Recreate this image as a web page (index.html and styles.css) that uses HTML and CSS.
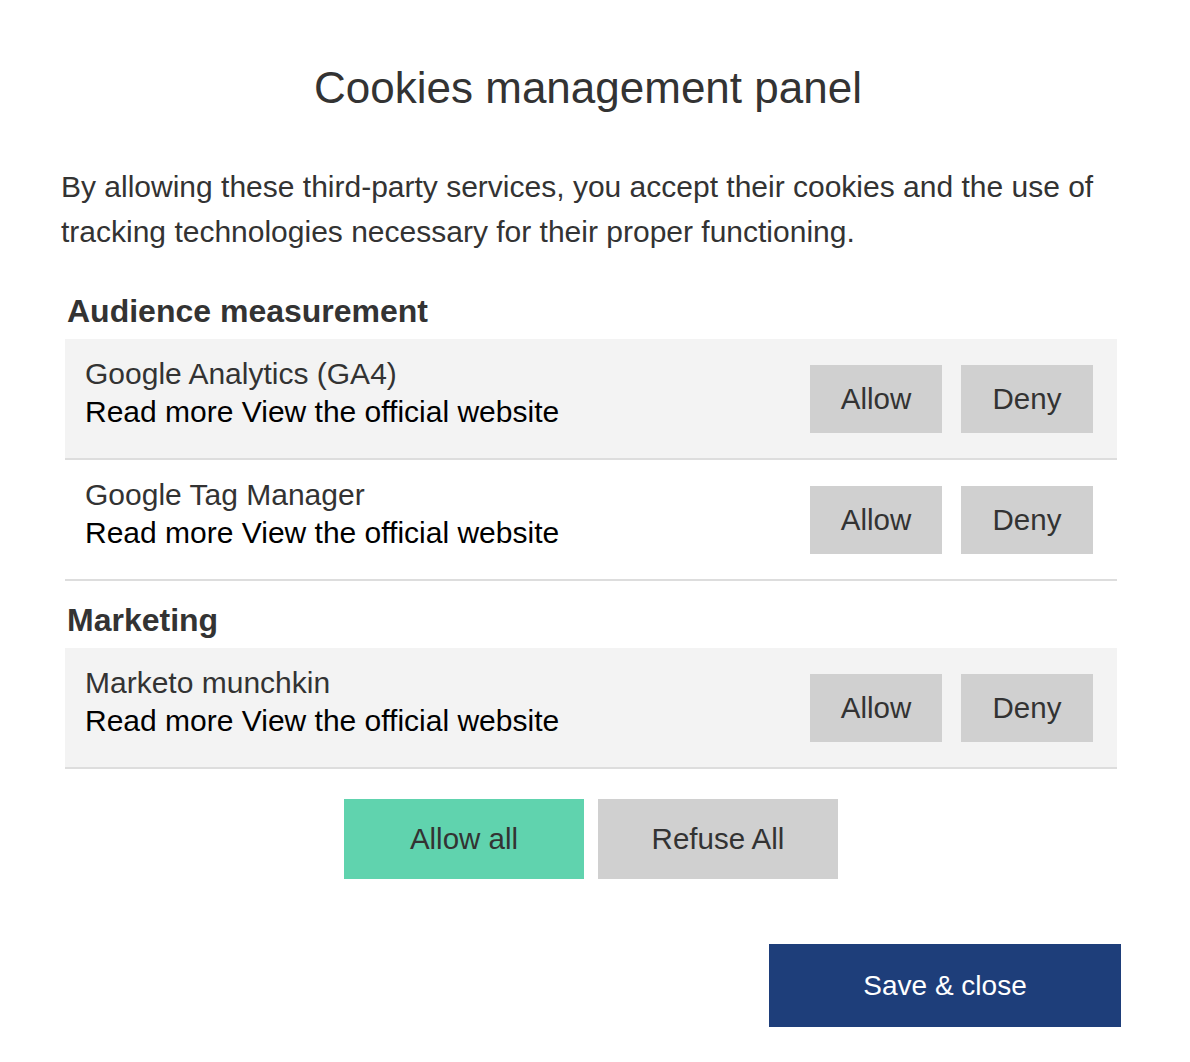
FILE: index.html
```html
<!DOCTYPE html>
<html lang="en">
<head>
<meta charset="utf-8">
<title>Cookies management panel</title>
<link rel="stylesheet" href="styles.css">
</head>
<body>
<div class="panel">
  <h1 class="title">Cookies management panel</h1>
  <p class="intro">By allowing these third-party services, you accept their cookies and the use of tracking technologies necessary for their proper functioning.</p>

  <h2 class="group-title">Audience measurement</h2>
  <div class="service shaded">
    <div class="service-info">
      <div class="service-name">Google Analytics (GA4)</div>
      <div class="service-links"><a href="#">Read more</a> <a href="#">View the official website</a></div>
    </div>
    <div class="service-actions">
      <button class="btn-small">Allow</button>
      <button class="btn-small">Deny</button>
    </div>
  </div>
  <div class="service">
    <div class="service-info">
      <div class="service-name">Google Tag Manager</div>
      <div class="service-links"><a href="#">Read more</a> <a href="#">View the official website</a></div>
    </div>
    <div class="service-actions">
      <button class="btn-small">Allow</button>
      <button class="btn-small">Deny</button>
    </div>
  </div>

  <h2 class="group-title second">Marketing</h2>
  <div class="service shaded">
    <div class="service-info">
      <div class="service-name">Marketo munchkin</div>
      <div class="service-links"><a href="#">Read more</a> <a href="#">View the official website</a></div>
    </div>
    <div class="service-actions">
      <button class="btn-small">Allow</button>
      <button class="btn-small">Deny</button>
    </div>
  </div>

  <div class="global-actions">
    <button class="btn-large btn-allow">Allow all</button>
    <button class="btn-large btn-refuse">Refuse All</button>
  </div>

  <div class="footer">
    <button class="btn-save">Save &amp; close</button>
  </div>
</div>
</body>
</html>
```

FILE: styles.css
```css
html, body {
  margin: 0;
  padding: 0;
  background: #ffffff;
}

body {
  font-family: "Liberation Sans", Arial, Helvetica, sans-serif;
  color: #333333;
}

.panel {
  width: 1060px;
  padding: 0 69px 0 61px;
}

.title {
  margin: 63px 0 0;
  padding-right: 6px;
  font-size: 44px;
  line-height: 50px;
  font-weight: normal;
  text-align: center;
  color: #333333;
}

.intro {
  margin: 51px 0 0;
  font-size: 30px;
  line-height: 45px;
  color: #333333;
}

.group-title {
  margin: 37px 0 0 6px;
  font-size: 32px;
  line-height: 40px;
  font-weight: bold;
  color: #333333;
}

.group-title.second {
  margin-top: 19px;
}

.service {
  margin: 8px 4px 0;
  display: flex;
  align-items: center;
  justify-content: space-between;
  height: 119px;
  padding: 0 24px 0 20px;
  border-bottom: 2px solid #dddddd;
  box-sizing: content-box;
}

.service + .service {
  margin-top: 0;
}

.service.shaded {
  background: #f3f3f3;
}

.service-info {
  font-size: 30px;
  line-height: 38px;
  margin-top: -11px;
}

.service-name {
  color: #333333;
}

.service-links a {
  color: #000000;
  text-decoration: none;
}

.service-actions {
  display: flex;
  gap: 19px;
}

button {
  font-family: "Liberation Sans", Arial, Helvetica, sans-serif;
  border: none;
  margin: 0;
  padding: 0;
  cursor: pointer;
}

.btn-small {
  width: 132px;
  height: 68px;
  background: #d0d0d0;
  color: #333333;
  font-size: 29.5px;
}

.global-actions {
  display: flex;
  justify-content: center;
  gap: 14px;
  margin-top: 30px;
}

.btn-large {
  width: 240px;
  height: 80px;
  font-size: 29.5px;
  color: #333333;
}

.btn-allow {
  background: #60d3ae;
}

.btn-refuse {
  background: #d0d0d0;
}

.footer {
  display: flex;
  justify-content: flex-end;
  margin-top: 65px;
}

.btn-save {
  width: 352px;
  height: 83px;
  background: #1e3e7a;
  color: #ffffff;
  font-size: 28px;
}
```
